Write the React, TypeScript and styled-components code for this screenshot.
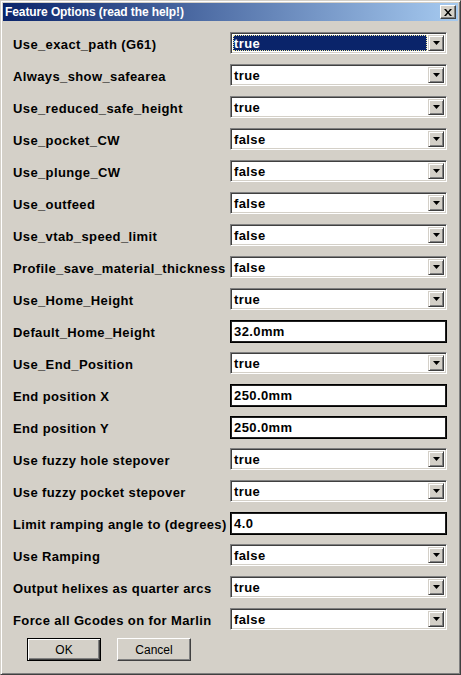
import React from 'react';
import styled, { createGlobalStyle } from 'styled-components';

const GlobalStyle = createGlobalStyle`
  html, body {
    margin: 0;
    padding: 0;
    background: #d4d0c8;
  }
  * {
    box-sizing: border-box;
  }
`;

const Window = styled.div`
  width: 461px;
  height: 675px;
  background: #d4d0c8;
  border: 1px solid;
  border-color: #d4d0c8 #404040 #404040 #d4d0c8;
  box-shadow: inset 1px 1px #fff, inset -1px -1px #808080;
  padding: 2px;
  display: flex;
  flex-direction: column;
  font-family: 'Liberation Sans', Arial, sans-serif;
`;

const TitleBar = styled.div`
  height: 18px;
  background: linear-gradient(to right, #0a246a, #a6caf0);
  display: flex;
  align-items: center;
  justify-content: space-between;
  padding: 0 2px 0 2px;
`;

const Title = styled.div`
  color: #fff;
  font-weight: bold;
  font-size: 12px;
  letter-spacing: -0.1px;
`;

const CloseButton = styled.div`
  width: 16px;
  height: 14px;
  background: #d4d0c8;
  border: 1px solid;
  border-color: #fff #404040 #404040 #fff;
  box-shadow: inset -1px -1px #808080;
  display: flex;
  align-items: center;
  justify-content: center;
`;

const Body = styled.div`
  flex: 1;
  padding: 6px 11px 0 10px;
  display: flex;
  flex-direction: column;
`;

const Row = styled.div`
  height: 32px;
  display: flex;
  align-items: center;
  justify-content: space-between;
`;

const Label = styled.div`
  font-weight: bold;
  font-size: 13px;
  letter-spacing: 0.38px;
  color: #000;
  padding-top: 2px;
`;

const Combo = styled.div`
  width: 217px;
  height: 22px;
  background: #fff;
  border: 1px solid;
  border-color: #808080 #fff #fff #808080;
  box-shadow: inset 1px 1px #404040, inset -1px -1px #d4d0c8;
  padding: 2px;
  display: flex;
`;

const ComboValue = styled.div<{ $selected?: boolean }>`
  flex: 1;
  font-weight: bold;
  font-size: 13px;
  letter-spacing: 0.4px;
  line-height: 15px;
  padding: 1px 0 0 1px;
  color: ${p => (p.$selected ? '#fff' : '#000')};
  background: ${p => (p.$selected ? '#0a246a' : 'transparent')};
  outline: ${p => (p.$selected ? '1px dotted #f0e8a0' : 'none')};
  outline-offset: -1px;
  margin-right: ${p => (p.$selected ? '1px' : '0')};
`;

const DropButton = styled.div`
  width: 16px;
  background: #d4d0c8;
  border: 1px solid;
  border-color: #d4d0c8 #404040 #404040 #d4d0c8;
  box-shadow: inset 1px 1px #fff, inset -1px -1px #808080;
  display: flex;
  align-items: center;
  justify-content: center;
`;

const TextField = styled.div`
  width: 217px;
  height: 23px;
  background: #fff;
  border: 1px solid #000;
  box-shadow: inset 0 0 0 1px #202020;
  font-weight: bold;
  font-size: 13px;
  letter-spacing: 0.4px;
  line-height: 15px;
  padding: 3px 0 0 3px;
  margin-top: 1px;
`;

const ButtonRow = styled.div`
  display: flex;
  gap: 16px;
  padding: 3px 0 0 14px;
`;

const Button = styled.div<{ $default?: boolean }>`
  width: 74px;
  height: 23px;
  background: #d4d0c8;
  border: 1px solid;
  border-color: ${p => (p.$default ? '#000' : '#fff #404040 #404040 #fff')};
  box-shadow: ${p =>
    p.$default
      ? 'inset 1px 1px #fff, inset -1px -1px #404040, inset -2px -2px #808080'
      : 'inset -1px -1px #808080'};
  font-size: 12px;
  color: #000;
  display: flex;
  align-items: center;
  justify-content: center;
`;

type Option = { label: string; value: string; kind: 'combo' | 'text' };

const options: Option[] = [
  { label: 'Use_exact_path (G61)', value: 'true', kind: 'combo' },
  { label: 'Always_show_safearea', value: 'true', kind: 'combo' },
  { label: 'Use_reduced_safe_height', value: 'true', kind: 'combo' },
  { label: 'Use_pocket_CW', value: 'false', kind: 'combo' },
  { label: 'Use_plunge_CW', value: 'false', kind: 'combo' },
  { label: 'Use_outfeed', value: 'false', kind: 'combo' },
  { label: 'Use_vtab_speed_limit', value: 'false', kind: 'combo' },
  { label: 'Profile_save_material_thickness', value: 'false', kind: 'combo' },
  { label: 'Use_Home_Height', value: 'true', kind: 'combo' },
  { label: 'Default_Home_Height', value: '32.0mm', kind: 'text' },
  { label: 'Use_End_Position', value: 'true', kind: 'combo' },
  { label: 'End position X', value: '250.0mm', kind: 'text' },
  { label: 'End position Y', value: '250.0mm', kind: 'text' },
  { label: 'Use fuzzy hole stepover', value: 'true', kind: 'combo' },
  { label: 'Use fuzzy pocket stepover', value: 'true', kind: 'combo' },
  { label: 'Limit ramping angle to (degrees)', value: '4.0', kind: 'text' },
  { label: 'Use Ramping', value: 'false', kind: 'combo' },
  { label: 'Output helixes as quarter arcs', value: 'true', kind: 'combo' },
  { label: 'Force all Gcodes on for Marlin', value: 'false', kind: 'combo' },
];

const Arrow = () => (
  <svg width="7" height="4" viewBox="0 0 7 4">
    <path d="M0 0h7L3.5 4z" fill="#000" />
  </svg>
);

const CloseX = () => (
  <svg width="8" height="7" viewBox="0 0 8 7">
    <path d="M0 0h2l2 2.5L6 0h2L5 3.5 8 7H6L4 4.5 2 7H0l3-3.5z" fill="#000" />
  </svg>
);

export default function App() {
  return (
    <>
      <GlobalStyle />
      <Window>
        <TitleBar>
          <Title>Feature Options (read the help!)</Title>
          <CloseButton>
            <CloseX />
          </CloseButton>
        </TitleBar>
        <Body>
          {options.map((o, i) => (
            <Row key={o.label}>
              <Label>{o.label}</Label>
              {o.kind === 'combo' ? (
                <Combo>
                  <ComboValue $selected={i === 0}>{o.value}</ComboValue>
                  <DropButton>
                    <Arrow />
                  </DropButton>
                </Combo>
              ) : (
                <TextField>{o.value}</TextField>
              )}
            </Row>
          ))}
          <ButtonRow>
            <Button $default>OK</Button>
            <Button>Cancel</Button>
          </ButtonRow>
        </Body>
      </Window>
    </>
  );
}
